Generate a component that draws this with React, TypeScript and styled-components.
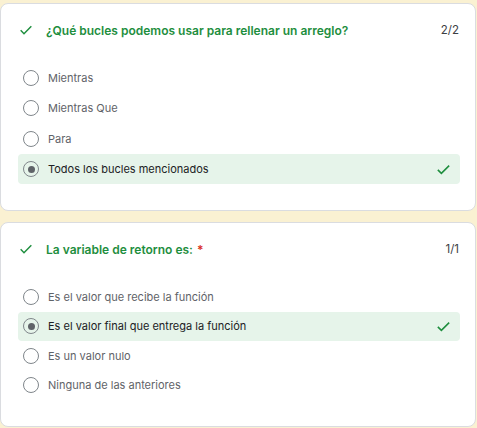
import React from "react";
import styled, { createGlobalStyle } from "styled-components";

const Global = createGlobalStyle`
  html, body { margin: 0; padding: 0; background: #faf1d2; }
  body { font-family: Inter, Roboto, "Noto Sans", Arial, sans-serif; }
`;

const Page = styled.div`
  display: flex;
  flex-direction: column;
  gap: 11px;
  padding-top: 3px;
  width: 476px;
`;

const Card = styled.section`
  background: #fff;
  border: 1px solid #dadce0;
  border-radius: 8px;
  padding: 16px 16px 26px 17px;
  box-sizing: border-box;
`;

const Header = styled.div<{ $gap: number }>`
  display: flex;
  align-items: center;
  height: 20px;
  margin-bottom: ${(p) => p.$gap}px;
`;

const Title = styled.div`
  flex: 1;
  margin-left: 12px;
  font-size: 12px;
  font-weight: 600;
  color: #1e8e3e;
`;

const Star = styled.span`
  color: #d93025;
  margin-left: 4px;
`;

const Score = styled.div`
  font-size: 11.5px;
  color: #3c4043;
`;

const Options = styled.div`
  display: flex;
  flex-direction: column;
  width: 442px;
`;

const Row = styled.div<{ $correct?: boolean; $h: number }>`
  display: flex;
  align-items: center;
  height: ${(p) => p.$h}px;
  padding: 0 8px 0 5px;
  border-radius: 4px;
  background: ${(p) => (p.$correct ? "#e6f4ea" : "transparent")};
`;

const Radio = styled.span<{ $checked?: boolean }>`
  width: 16px;
  height: 16px;
  border: 1.5px solid #80868b;
  border-radius: 50%;
  box-sizing: border-box;
  display: flex;
  align-items: center;
  justify-content: center;
  &::after {
    content: "";
    display: ${(p) => (p.$checked ? "block" : "none")};
    width: 7px;
    height: 7px;
    border-radius: 50%;
    background: #5f6368;
  }
`;

const Label = styled.span<{ $checked?: boolean }>`
  flex: 1;
  margin-left: 9px;
  font-size: 11px;
  color: ${(p) => (p.$checked ? "#202124" : "#5f6368")};
`;

const Check = ({ size = 16 }: { size?: number }) => (
  <svg width={size} height={size} viewBox="0 0 24 24">
    <path d="M4 12.5l5 5L20 6.5" fill="none" stroke="#1e8e3e" strokeWidth="2.2" />
  </svg>
);

type Q = {
  title: string;
  required?: boolean;
  score: string;
  options: string[];
  answer: number;
  rowH: number;
  gap: number;
};

const questions: Q[] = [
  {
    title: "¿Qué bucles podemos usar para rellenar un arreglo?",
    score: "2/2",
    options: ["Mientras", "Mientras Que", "Para", "Todos los bucles mencionados"],
    answer: 3,
    rowH: 30.3,
    gap: 23,
  },
  {
    title: "La variable de retorno es:",
    required: true,
    score: "1/1",
    options: [
      "Es el valor que recibe la función",
      "Es el valor final que entrega la función",
      "Es un valor nulo",
      "Ninguna de las anteriores",
    ],
    answer: 1,
    rowH: 29.5,
    gap: 23,
  },
];

export default function App() {
  return (
    <>
      <Global />
      <Page>
        {questions.map((q) => (
          <Card key={q.title}>
            <Header $gap={q.gap}>
              <Check />
              <Title>
                {q.title}
                {q.required && <Star>*</Star>}
              </Title>
              <Score>{q.score}</Score>
            </Header>
            <Options>
              {q.options.map((o, i) => (
                <Row key={o} $correct={i === q.answer} $h={q.rowH}>
                  <Radio $checked={i === q.answer} />
                  <Label $checked={i === q.answer}>{o}</Label>
                  {i === q.answer && <Check size={17} />}
                </Row>
              ))}
            </Options>
          </Card>
        ))}
      </Page>
    </>
  );
}
